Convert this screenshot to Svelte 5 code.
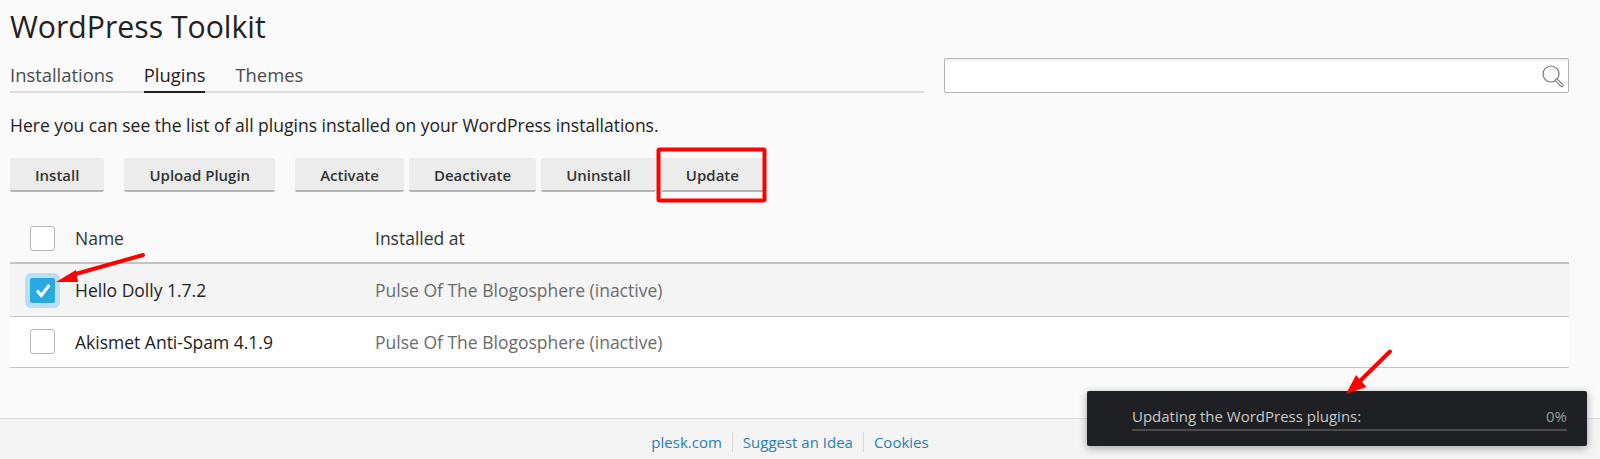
<script>
  const buttonGroups = [["Install"], ["Upload Plugin"], ["Activate", "Deactivate", "Uninstall", "Update"]];
  const rows = [
    { name: "Hello Dolly 1.7.2", site: "Pulse Of The Blogosphere (inactive)", checked: true },
    { name: "Akismet Anti-Spam 4.1.9", site: "Pulse Of The Blogosphere (inactive)", checked: false }
  ];
</script>

<div class="page">
  <main>
    <h1>WordPress Toolkit</h1>
    <div class="tabbar">
      <nav>
        <a href="#i">Installations</a>
        <a href="#p" class="active">Plugins</a>
        <a href="#t">Themes</a>
      </nav>
      <div class="search">
        <svg width="24" height="24" viewBox="0 0 24 24" fill="none">
          <circle cx="10" cy="10" r="8" stroke="#777" stroke-width="1.2" />
          <path d="M15.5 16 L21 21.5" stroke="#777" stroke-width="3.4" stroke-linecap="round" />
          <path d="M15.5 16 L21 21.5" stroke="#fff" stroke-width="1.2" stroke-linecap="round" />
        </svg>
      </div>
    </div>
    <p class="intro">Here you can see the list of all plugins installed on your WordPress installations.</p>
    <div class="toolbar">
      {#each buttonGroups as group}
        <div class="group">
          {#each group as label}
            <button>{label}</button>
          {/each}
        </div>
      {/each}
    </div>
    <div class="thead">
      <span class="box"></span>
      <span class="name">Name</span>
      <span>Installed at</span>
    </div>
    {#each rows as row}
      <div class="row" class:selected={row.checked}>
        <span class="box" class:checked={row.checked}>
          {#if row.checked}
            <svg width="25" height="25" viewBox="0 0 25 25" fill="none">
              <path d="M7 12.500 L11.300 17.500 L19.300 7" stroke="#fff" stroke-width="3" />
            </svg>
          {/if}
        </span>
        <span class="name">{row.name}</span>
        <span class="site">{row.site}</span>
      </div>
    {/each}
  </main>
  <footer>
    <a href="#a">plesk.com</a>
    <a href="#b">Suggest an Idea</a>
    <a href="#c">Cookies</a>
  </footer>

  <div class="toast">
    <div class="toast-line">
      <span>Updating the WordPress plugins:</span>
      <span class="pct">0%</span>
    </div>
  </div>

  <svg class="marks" width="1600" height="459" viewBox="0 0 1600 459" fill="none">
    <rect x="658.5" y="149.5" width="106" height="51" rx="1" stroke="#fe0000" stroke-width="4" />
    <path d="M143 255 L72 275" stroke="#fe0000" stroke-width="4" stroke-linecap="round" />
    <path d="M56 282 L76 270 L78 282 Z" fill="#fe0000" />
    <path d="M1390 351.500 L1358 383" stroke="#fe0000" stroke-width="4" stroke-linecap="round" />
    <path d="M1346 394 L1356 375 L1366.500 387 Z" fill="#fe0000" />
  </svg>
</div>

<style>
  :global(body) {
    margin: 0;
    background: #fafafa;
  }
  .page {
    position: relative;
    width: 1600px;
    height: 459px;
    overflow: hidden;
    display: flex;
    flex-direction: column;
    font-family: "Open Sans", sans-serif;
    font-size: 17.5px;
    color: #222;
  }
  main {
    flex: 1;
    padding: 0 31px 0 10px;
  }
  h1 {
    margin: 8px 0 0;
    font-size: 30.2px;
    line-height: 38px;
    font-weight: 400;
    color: #222;
  }
  .tabbar {
    display: flex;
    align-items: flex-end;
    gap: 20px;
    margin-top: 12px;
  }
  nav {
    flex: 1;
    display: flex;
    gap: 30px;
    border-bottom: 2px solid #ddd;
    height: 33px;
    font-size: 18.4px;
  }
  nav a {
    color: #4b4b4b;
    text-decoration: none;
    line-height: 33px;
    height: 33px;
  }
  nav a.active {
    color: #222;
    font-weight: 500;
    border-bottom: 2px solid #222;
  }
  .search {
    width: 620px;
    height: 33px;
    background: #fff;
    border: 1px solid #b5b5b5;
    border-radius: 2px;
    box-shadow: inset 0 3px 2px -1px #eee;
    display: flex;
    justify-content: flex-end;
    align-items: center;
    padding-right: 3px;
    flex: none;
  }
  .intro {
    margin: 20px 0 0;
    line-height: 24px;
    color: #222;
  }
  .toolbar {
    display: flex;
    gap: 20px;
    margin-top: 21px;
  }
  .group {
    display: flex;
    gap: 5px;
  }
  button {
    height: 34px;
    padding: 2px 25px 0;
    border: 0;
    border-bottom: 2px solid #b5b5b5;
    border-radius: 2px;
    background: #ececec;
    font: 600 15px "Open Sans", sans-serif;
    color: #333;
  }
  .thead, .row {
    display: flex;
    align-items: center;
    padding-left: 20px;
    box-sizing: border-box;
  }
  .thead {
    height: 72px;
    padding-top: 22px;
    color: #333;
    border-bottom: 2px solid #c4c4c4;
  }
  .row {
    height: 51px;
    padding-bottom: 1px;
    background: #fff;
    border-bottom: 1px solid #c4c4c4;
  }
  .row.selected {
    background: #f5f5f5;
    height: 53px;
    padding-bottom: 0;
  }
  .box {
    flex: none;
    width: 25px;
    height: 25px;
    box-sizing: border-box;
    background: #fff;
    border: 1px solid #b5b5b5;
    border-radius: 3px;
  }
  .box.checked {
    background: #28aae1;
    border: 0;
    border-radius: 2px;
    box-shadow: 0 0 0 5px #b9dff7;
  }
  .box svg {
    display: block;
  }
  .name {
    width: 300px;
    margin-left: 20px;
  }
  .site {
    color: #6b6b6b;
  }
  footer {
    background: #f4f4f4;
    border-top: 1px solid #ddd;
    display: flex;
    justify-content: center;
    align-items: center;
    font-size: 15px;
    padding: 6px 20px 0 0;
    box-sizing: border-box;
    height: 41px;
  }
  footer a {
    color: #2a7fb5;
    text-decoration: none;
    padding: 0 10px;
    line-height: 20px;
  }
  footer a + a {
    border-left: 1px solid #d8d8d8;
  }
  .toast {
    position: absolute;
    left: 1087px;
    top: 391px;
    width: 500px;
    height: 55px;
    box-sizing: border-box;
    padding: 12px 20px 0 45px;
    background: #1f2024;
    border-radius: 2px;
    box-shadow: 0 2px 8px rgba(0, 0, 0, 0.35);
    font-size: 15px;
    color: #c8c8c8;
  }
  .toast-line {
    display: flex;
    justify-content: space-between;
    height: 26px;
    line-height: 26px;
    border-bottom: 2px solid #4a4a4d;
  }
  .pct {
    color: #9a9a9a;
  }
  .marks {
    position: absolute;
    left: 0;
    top: 0;
    pointer-events: none;
  }
</style>
